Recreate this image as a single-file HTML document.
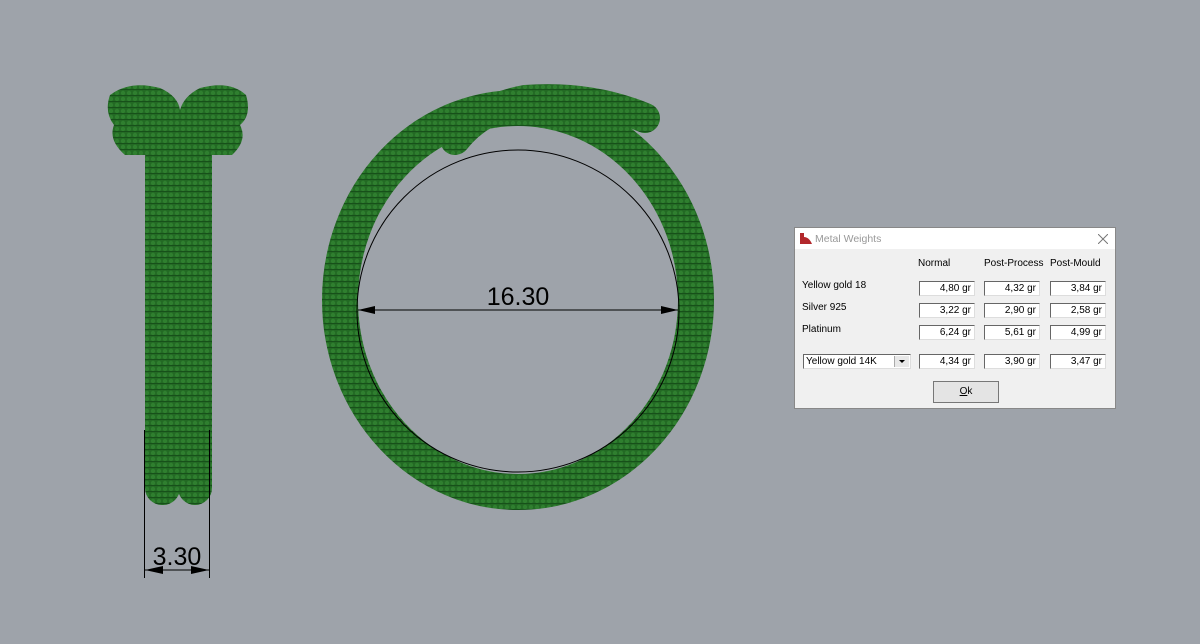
<!DOCTYPE html>
<html><head><meta charset="utf-8"><style>
body{margin:0;width:1200px;height:644px;background:#9ea3aa;overflow:hidden;position:relative;font-family:"Liberation Sans",sans-serif}
.dlg{position:absolute;left:794px;top:227px;width:322px;height:182px;background:#f0f0f0;border:1px solid #888;box-sizing:border-box;font-size:10px;color:#000}
.tb{height:21px;background:#fff;position:relative}
.tb span{position:absolute;left:20px;top:5px;color:#999;font-size:10.5px}
.abs{position:absolute}
.box{position:absolute;width:56px;height:15px;background:#fff;border-top:1px solid #666;border-left:1px solid #666;border-bottom:1px solid #ddd;border-right:1px solid #ddd;box-sizing:border-box;text-align:right;padding-right:3px;font-size:10px;line-height:14px}
</style></head><body>
<svg width="1200" height="644" style="position:absolute;left:0;top:0">
<defs>
<pattern id="k" width="6" height="6" patternUnits="userSpaceOnUse"><rect width="6" height="6" fill="#236a24"/><circle cx="3" cy="3" r="2.2" fill="#2f7f2f"/><rect y="5" width="6" height="1" fill="#17501a"/></pattern>
</defs>
<g fill="url(#k)">
<rect x="145" y="140" width="35" height="365" rx="17"/>
<rect x="178" y="140" width="34" height="365" rx="17"/>
<path d="M110,95 Q130,80 160,88 Q178,96 180,110 Q184,96 200,88 Q230,80 246,95 Q252,115 240,125 Q248,140 232,155 L125,155 Q108,140 114,125 Q104,112 110,95Z"/>
</g>
<line x1="144.5" y1="430" x2="144.5" y2="578" stroke="#000"/>
<line x1="209.5" y1="430" x2="209.5" y2="578" stroke="#000"/>
<line x1="145" y1="570" x2="209" y2="570" stroke="#000"/>
<path d="M145,570 L163,566 L163,574Z M209,570 L191,566 L191,574Z"/>
<text x="177" y="565" font-size="25" text-anchor="middle" font-family="Liberation Sans">3.30</text>
<ellipse cx="518" cy="300" rx="178" ry="192" fill="none" stroke="url(#k)" stroke-width="36"/>
<path d="M455,140 Q480,108 525,100 Q590,95 645,118" fill="none" stroke="url(#k)" stroke-width="30" stroke-linecap="round"/>
<circle cx="518" cy="311" r="161" fill="none" stroke="#000" stroke-width="1"/>
<line x1="358" y1="310" x2="678" y2="310" stroke="#000"/>
<path d="M358,310 L375,306 L375,314Z M678,310 L661,306 L661,314Z"/>
<text x="518" y="305" font-size="25" text-anchor="middle" font-family="Liberation Sans">16.30</text>
</svg>
<div class="dlg">
<div class="tb"><svg class="abs" style="left:5px;top:5px" width="12" height="11"><path d="M0,0 L4,0 L4,4 Q9,4 12,11 L0,11Z" fill="#b2282c"/></svg><span>Metal Weights</span>
<svg class="abs" style="left:303px;top:6px" width="10" height="10"><path d="M0,0L10,10M10,0L0,10" stroke="#777" stroke-width="1"/></svg></div>
<div class="abs" style="left:123px;top:30px">Normal</div>
<div class="abs" style="left:189px;top:30px">Post-Process</div>
<div class="abs" style="left:255px;top:30px">Post-Mould</div>
<div class="abs" style="left:7px;top:52px">Yellow gold 18</div>
<div class="abs" style="left:7px;top:74px">Silver 925</div>
<div class="abs" style="left:7px;top:96px">Platinum</div>
<div class="box" style="left:124px;top:53px">4,80 gr</div><div class="box" style="left:189px;top:53px">4,32 gr</div><div class="box" style="left:255px;top:53px">3,84 gr</div>
<div class="box" style="left:124px;top:75px">3,22 gr</div><div class="box" style="left:189px;top:75px">2,90 gr</div><div class="box" style="left:255px;top:75px">2,58 gr</div>
<div class="box" style="left:124px;top:97px">6,24 gr</div><div class="box" style="left:189px;top:97px">5,61 gr</div><div class="box" style="left:255px;top:97px">4,99 gr</div>
<div class="box" style="left:124px;top:126px">4,34 gr</div><div class="box" style="left:189px;top:126px">3,90 gr</div><div class="box" style="left:255px;top:126px">3,47 gr</div>
<div class="box" style="left:8px;top:126px;width:108px;text-align:left;padding-left:2px">Yellow gold 14K<div class="abs" style="right:1px;top:1px;width:14px;height:11px;background:#e8e8e8;border-left:1px solid #aaa"><svg width="14" height="11" style="display:block"><path d="M4,4L10,4L7,7Z"/></svg></div></div>
<div class="abs" style="left:138px;top:153px;width:66px;height:22px;border:1px solid #777;background:#e4e4e4;box-sizing:border-box;text-align:center;line-height:20px"><u>O</u>k</div>
</div>
</body></html>
